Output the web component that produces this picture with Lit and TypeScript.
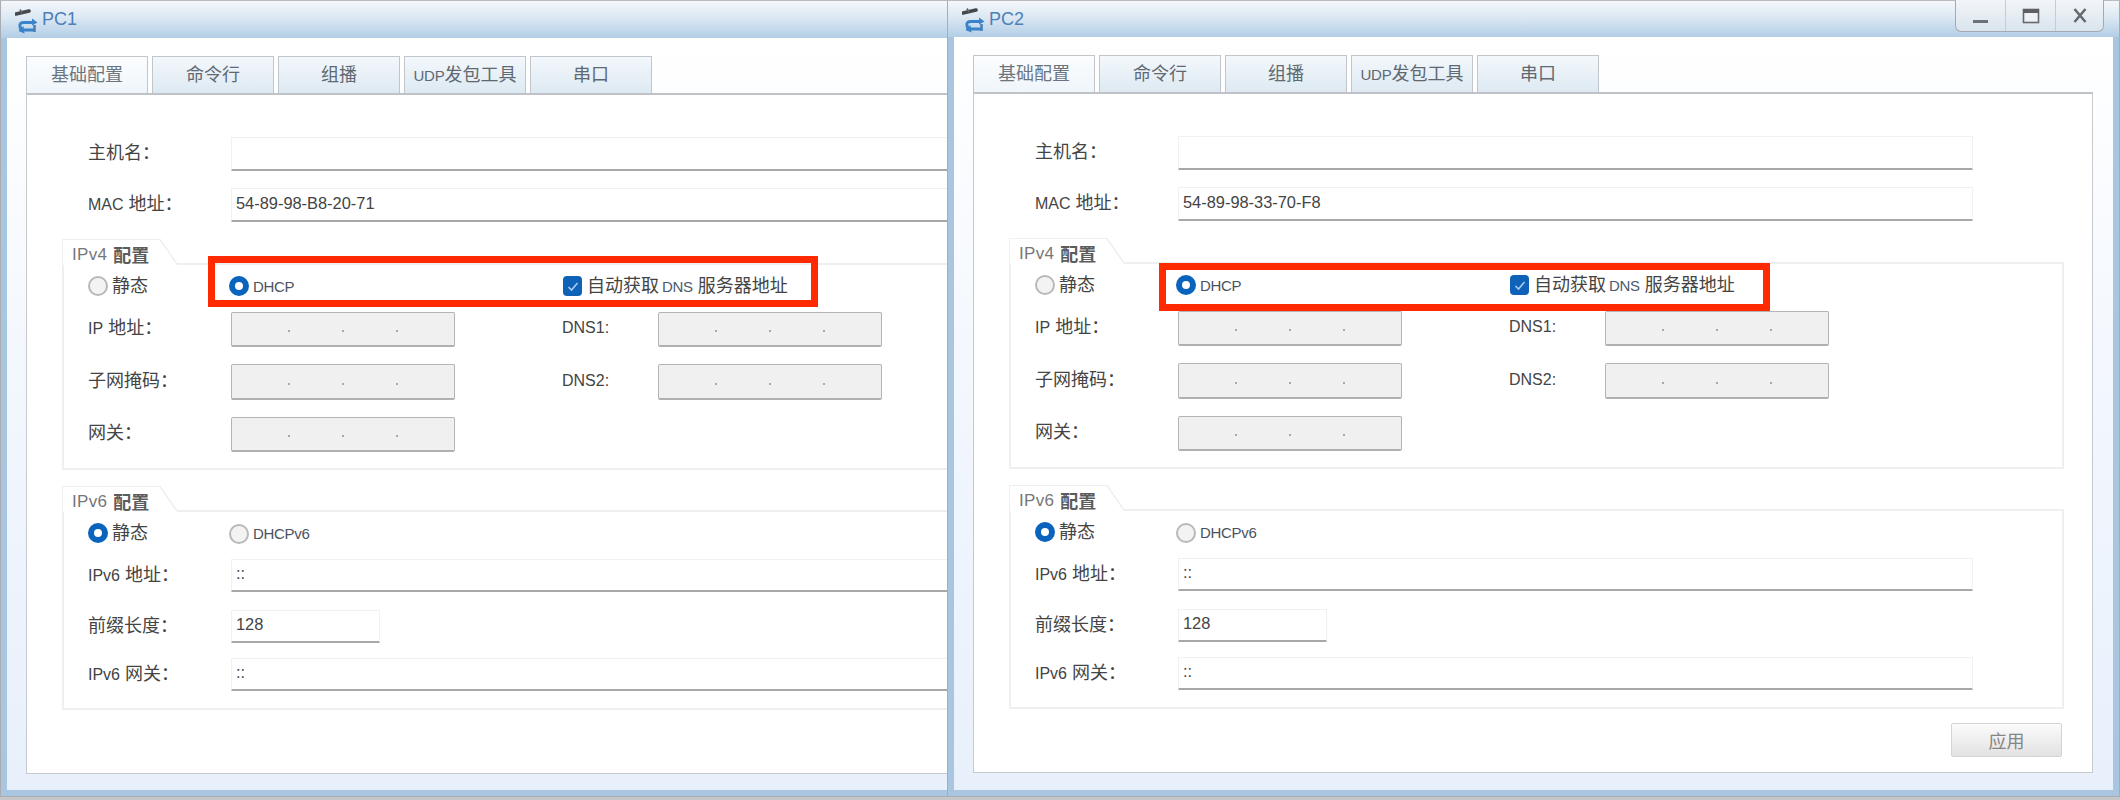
import { LitElement, html, css, svg } from "lit";
import { customElement, property } from "lit/decorators.js";

const SANS = css`"Liberation Sans", "Noto Sans CJK SC", sans-serif`;

@customElement("pc-window")
class PcWindow extends LitElement {
  @property() name = "";
  @property() mac = "";
  @property({ type: Boolean }) controls = false;

  static styles = css`
    :host {
      display: flex;
      flex-direction: column;
      height: 797px;
      width: 1173px;
      box-sizing: border-box;
      border: 1px solid #a9adb1;
      border-top-color: #b8bcc0;
      font-family: ${SANS};
      color: #4a4a4a;
      background: #a9c6e0;
      position: relative;
    }
    .title {
      flex: none;
      height: 37px;
      margin: 0 5px 0 5px;
      display: flex;
      align-items: center;
      gap: 3px;
    }
    :host([lower]) .title { height: 36px; }
    .bar {
      position: absolute;
      left: 0; right: 0; top: 0;
      height: 37px;
      background: linear-gradient(#f4f7fb, #dce8f3 45%, #b2cee6);
    }
    :host([lower]) .bar { height: 36px; }
    .title > * { position: relative; }
    .title svg { margin-left: 9px; }
    .name { font-size: 18px; color: #4c80b8; }
    .title .ctl {
      position: absolute;
      top: -1px; right: 15px;
      width: 149px;
      height: 32px;
      box-sizing: border-box;
      display: grid;
      grid-template-columns: 49px 50px 1fr;
      border: 1px solid #a6aaae;
      border-top: none;
      border-radius: 0 0 6px 6px;
      background: linear-gradient(#f2f5f8, #d9e4ee);
    }
    .ctl div { display: flex; align-items: center; justify-content: center; border-left: 1px solid #c4ccd4; }
    .ctl div:first-child { border-left: none; }
    .ctl svg { margin: 0; }
    .body {
      flex: 1;
      min-height: 0;
      margin: 0 6px 6px 6px;
      padding: 18px 20px 16px 19px;
      display: flex;
      flex-direction: column;
      background: linear-gradient(#ffffff, #f4f8fe 40%, #e8f0fc);
    }
    :host([lower]) .body { padding-bottom: 17px; }
    .tabs { display: flex; gap: 4px; flex: none; }
    .tab {
      width: 122px;
      height: 37px;
      box-sizing: border-box;
      border: 1px solid #c2c6ca;
      border-bottom: none;
      display: flex;
      align-items: center;
      justify-content: center;
      font-size: 18px;
      color: #5f6972;
      background: linear-gradient(#f3f8fc, #dde9f2);
      line-height: 1;
    }
    .tab.on { background: linear-gradient(#fbfdfe, #eff5fb); color: #6a7580; }
    .udp { font-size: 15px; letter-spacing: -0.2px; }
    .udp b { font-weight: normal; font-size: 18px; letter-spacing: 0; }
    .panel {
      flex: 1;
      min-height: 0;
      box-sizing: border-box;
      border: 1px solid #c6cacd;
      border-top: 2px solid #bfc3c7;
      background: #fff;
      padding: 42px 28px 0 35px;
      display: flex;
      flex-direction: column;
    }
    .row { display: flex; align-items: center; padding-left: 26px; }
    .row + .row { margin-top: 17px; }
    .lab { flex: none; width: 143px; font-size: 18px; line-height: 1; color: #444; white-space: nowrap; margin-bottom: 2px; }
    .lat { font-size: 16px; }
    .in {
      flex: none;
      width: 795px;
      height: 34px;
      box-sizing: border-box;
      border: 1px solid #f1f1f1;
      border-bottom: 2px solid #a8a8a8;
      background: #fff;
      border-radius: 1px;
      display: flex;
      align-items: center;
      padding: 0 0 3px 4px;
      font-size: 16.4px;
      color: #444;
    }
    .short { width: 149px; }
    .group { margin-top: 17px; flex: none; }
    .ghead { display: flex; height: 26px; }
    .leg {
      flex: none;
      width: 97px;
      box-sizing: border-box;
      border-top: 1px solid #efefef;
      border-left: 1px solid #efefef;
      padding: 2px 0 0 9px;
      display: flex;
      align-items: center;
      gap: 6px;
      color: #777;
      font-size: 17px;
      letter-spacing: 0.3px;
      white-space: nowrap;
    }
    .leg span { margin-top: 2px; }
    .leg b { font-size: 18px; letter-spacing: 0; color: #5c5c5c; }
    .ghead svg { flex: none; }
    .fill { flex: 1; border-bottom: 2px solid #efefef; }
    .gbody {
      border: 2px solid #efefef;
      border-top: none;
    }
    .g4 {
      display: grid;
      grid-template-columns: 143px 331px 96px 224px;
      grid-template-rows: 20px 35px 36px 35px;
      row-gap: 17px;
      align-items: center;
      padding: 10px 0 16px 24px;
    }
    .g4 > .opt { margin-top: 2px; }
    .g4 > .lab { margin-bottom: 3px; }
    .ip {
      height: 100%;
      width: 224px;
      box-sizing: border-box;
      border: 1px solid #b4b4b4;
      border-bottom: 2px solid #b0b0b0;
      border-radius: 2px;
      background: #f0f0f0;
      display: flex;
      gap: 52px;
      align-items: center;
      padding-left: 56px;
    }
    .ip i { width: 2px; height: 2px; background: #a9a9a9; margin-top: 4px; }
    .opt { display: flex; align-items: center; font-size: 18px; line-height: 1; color: #444; white-space: nowrap; }
    .opt.shift { margin-left: -2px; }
    .radio {
      flex: none;
      width: 20px; height: 20px;
      box-sizing: border-box;
      border-radius: 50%;
      border: 2px solid #b9b9b9;
      background: #f3f3f3;
      margin-right: 4px;
    }
    .radio.on { border: 6px solid #0a64bd; background: #fff; }
    .dh { font-size: 15px; letter-spacing: -0.3px; color: #4a5260; }
    .check {
      flex: none;
      width: 19px; height: 20px;
      border-radius: 4px;
      background: #0e62b8;
      margin: 0 5px 0 1px;
      display: flex; align-items: center; justify-content: center;
    }
    .dns { font-size: 15px; letter-spacing: -0.3px; color: #4a5a70; margin: 0 5px 0 3px; }
    .v6 { padding: 10px 0 17px 24px; }
    .v6 .row { padding-left: 0; }
    .radios { display: flex; height: 20px; }
    .radios .opt { margin-top: 1px; }
    .radios .opt:first-child { width: 141px; }
    .radios .opt:last-child { margin-top: 3px; }
    .v6 .row.m17 { margin-top: 17px; }
    .v6 .row.m18 { margin-top: 18px; }
    .v6 .row.m15 { margin-top: 15px; }
    .v6 .in { height: 33px; }
    .g6 { margin-top: 16px; }
    .act { display: flex; justify-content: flex-end; padding: 14px 2px 0 0; }
    .apply {
      width: 111px; height: 34px;
      box-sizing: border-box;
      border: 1px solid #d4d4d4;
      border-radius: 2px;
      background: linear-gradient(#fbfbfb, #e2e2e2);
      display: flex; align-items: center; justify-content: center;
      font-size: 18px;
      color: #858585;
    }
  `;

  private dots() {
    return html`<div class="ip"><i></i><i></i><i></i></div>`;
  }

  private head(label: string) {
    return html`<div class="ghead">
      <div class="leg"><span>${label}</span><b>配置</b></div>
      <svg width="19" height="26" viewBox="0 0 19 26">
        <path d="M0 .5 H1 L18 25" fill="none" stroke="#efefef" stroke-width="1.5" />
        <path d="M18 25 H19" stroke="#efefef" stroke-width="2" />
      </svg>
      <div class="fill"></div>
    </div>`;
  }

  private icon() {
    return html`<svg width="24" height="28" viewBox="0 0 24 28">
      ${svg`
      <path d="M1 8 L14 5" stroke="#45494e" stroke-width="3.6" stroke-linecap="round"/>
      <path d="M5 3.5 L7 7" stroke="#5f6368" stroke-width="1.6"/>
      <path d="M20 16.5 H9 Q4 16.5 5 20.5 L6 24 H19" fill="none" stroke="#3a82ca" stroke-width="3"/>
      <path d="M17 12.5 L22.5 16.5 L17 19.5 Z" fill="#3a82ca"/>
      <path d="M8.5 20 L3.5 25 L9.5 27.5 Z" fill="#3a82ca"/>
      <path d="M19.5 19 V26" stroke="#4a7fb8" stroke-width="2.6"/>
      `}
    </svg>`;
  }

  render() {
    return html`
      <div class="bar"></div>
      <div class="title">${this.icon()}<span class="name">${this.name}</span>
        ${this.controls
          ? html`<div class="ctl">
              <div><svg width="16" height="20" viewBox="0 0 16 20"><rect y="14" width="15" height="3" fill="#6d7074"/></svg></div>
              <div><svg width="18" height="16" viewBox="0 0 18 16"><rect x="1.5" y="1.5" width="15" height="13" fill="#eef2f6" stroke="#66696d" stroke-width="1.6"/><rect x="1" y="1" width="16" height="4" fill="#5c5f63"/></svg></div>
              <div><svg width="14" height="15" viewBox="0 0 14 15"><path d="M1.5 1 L12.5 14 M12.5 1 L1.5 14" stroke="#66696d" stroke-width="2.6"/></svg></div>
            </div>`
          : ""}
      </div>
      <div class="body">
        <div class="tabs">
          <div class="tab on">基础配置</div>
          <div class="tab">命令行</div>
          <div class="tab">组播</div>
          <div class="tab udp">UDP<b>发包工具</b></div>
          <div class="tab">串口</div>
        </div>
        <div class="panel">
          <div class="row"><span class="lab">主机名：</span><div class="in"></div></div>
          <div class="row"><span class="lab"><span class="lat">MAC</span> 地址：</span><div class="in">${this.mac}</div></div>

          <div class="group">
            ${this.head("IPv4")}
            <div class="gbody g4">
              <div class="opt"><span class="radio"></span>静态</div>
              <div class="opt shift"><span class="radio on"></span><span class="dh">DHCP</span></div>
              <div class="opt" style="grid-column: 3 / 5"><span class="check"><svg width="12" height="11" viewBox="0 0 12 11"><path d="M1.5 6 L4.5 9 L10.5 2" fill="none" stroke="#a9cdf0" stroke-width="1.6"/></svg></span>自动获取<span class="dns">DNS</span>服务器地址</div>

              <span class="lab"><span class="lat">IP</span> 地址：</span>${this.dots()}
              <span class="lab lat">DNS1:</span>${this.dots()}

              <span class="lab">子网掩码：</span>${this.dots()}
              <span class="lab lat">DNS2:</span>${this.dots()}

              <span class="lab">网关：</span>${this.dots()}
            </div>
          </div>

          <div class="group g6">
            ${this.head("IPv6")}
            <div class="gbody v6">
              <div class="radios">
                <div class="opt"><span class="radio on"></span>静态</div>
                <div class="opt"><span class="radio"></span><span class="dh">DHCPv6</span></div>
              </div>
              <div class="row m17"><span class="lab"><span class="lat">IPv6</span> 地址：</span><div class="in">::</div></div>
              <div class="row m18"><span class="lab">前缀长度：</span><div class="in short">128</div></div>
              <div class="row m15"><span class="lab"><span class="lat">IPv6</span> 网关：</span><div class="in">::</div></div>
            </div>
          </div>

          ${this.controls ? html`<div class="act"><div class="apply">应用</div></div>` : ""}
        </div>
      </div>
    `;
  }
}

@customElement("app-root")
export class AppRoot extends LitElement {
  static styles = css`
    :host {
      display: block;
      position: relative;
      width: 2120px;
      height: 800px;
      overflow: hidden;
      background: #c4c6c8;
    }
    .desk { display: flex; }
    .clip { flex: none; width: 947px; overflow: hidden; }
    .red { position: absolute; box-sizing: border-box; border: 7.5px solid #ff2a00; }
    .r1 { left: 208px; top: 256px; width: 610px; height: 51px; }
    .r2 { left: 1159px; top: 263px; width: 611px; height: 48px; }
  `;
  render() {
    return html`
      <div class="desk">
        <div class="clip"><pc-window name="PC1" mac="54-89-98-B8-20-71"></pc-window></div>
        <pc-window lower name="PC2" mac="54-89-98-33-70-F8" controls></pc-window>
      </div>
      <div class="red r1"></div>
      <div class="red r2"></div>
    `;
  }
}
void PcWindow;
